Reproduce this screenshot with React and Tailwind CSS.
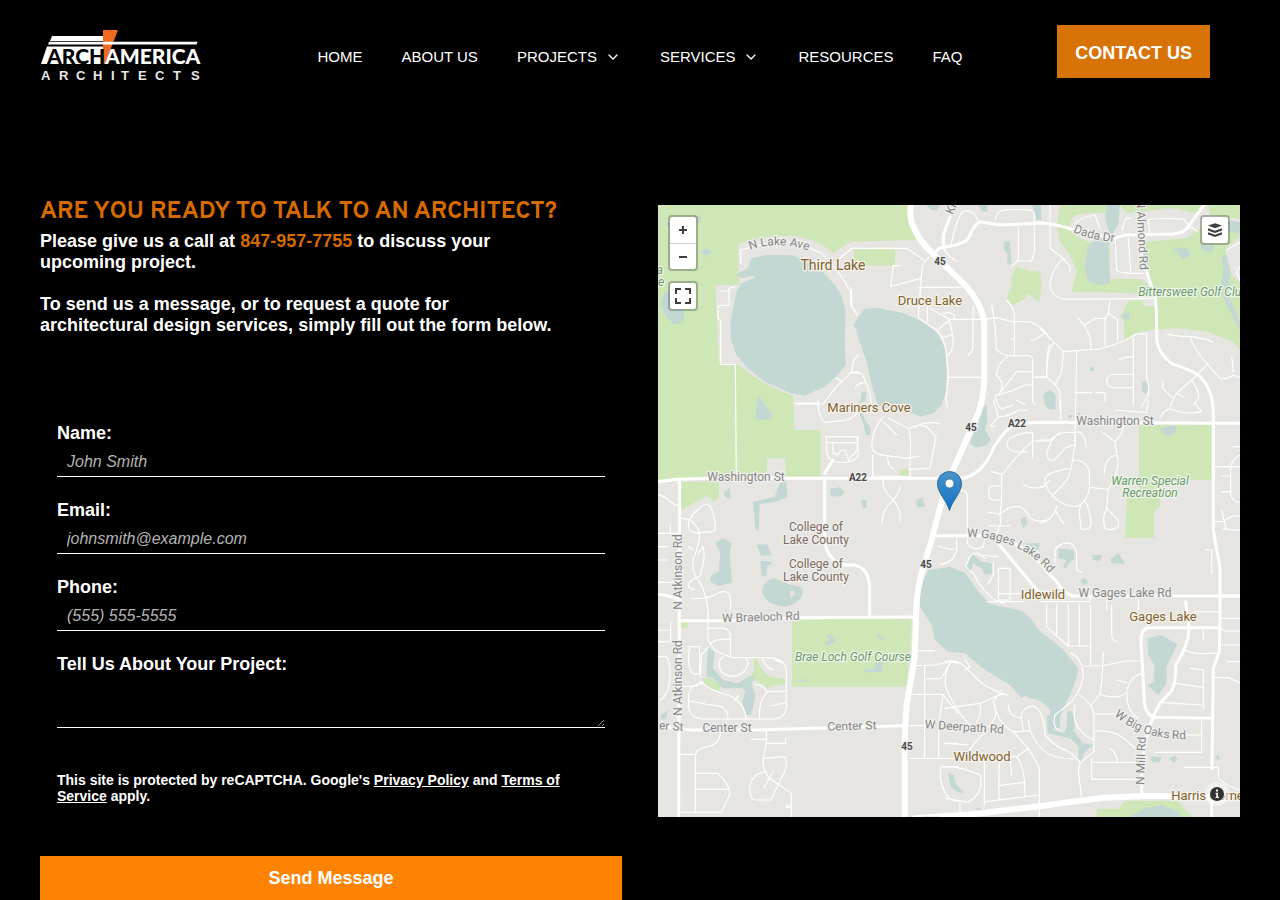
import React from "react";
import { ChevronDown } from "lucide-react";

const navItems = [
    { label: "HOME" },
    { label: "ABOUT US" },
    { label: "PROJECTS", menu: true },
    { label: "SERVICES", menu: true },
    { label: "RESOURCES" },
    { label: "FAQ" },
];

const fields = [
    { id: "name", label: "Name:", type: "text", placeholder: "John Smith" },
    { id: "email", label: "Email:", type: "email", placeholder: "johnsmith@example.com" },
    { id: "phone", label: "Phone:", type: "tel", placeholder: "(555) 555-5555" },
];

// Map geometry, split in tiles. Each tile is drawn at three units per map pixel.
const tiles = [
    {
        x: 0,
        y: 0,
        parks: "M0 0H752L760 60L781 105L576 110L525 145Q480 100 400 93Q320 88 240 118L243 240L173 240L183 475L235 478L258 492Q330 550 405 570L410 675H488V815H382V760H327V818L65 822L0 828Z",
        water: "M248 200L270 190L280 160L320 150L400 150L450 170L500 205L530 240L550 270L563 320L560 400L563 480L535 515L500 545L440 572L400 565L320 530L270 490L235 450L218 400L217 350L235 260L250 235L290 218L285 212L250 220L235 208ZM127 140L145 130L162 142L145 154ZM8 295Q12 260 35 258L75 300Q85 330 75 345Q60 365 45 355Q12 330 8 295ZM115 35H130L128 50L118 55ZM22 55L36 52V62L22 60ZM300 572L292 643H340L342 625L318 595ZM585 360L600 350V380Z",
        minor: "M248 175V135Q330 108 400 112Q450 125 490 145Q540 190 578 260V300L598 330M190 258H213V300L180 303V340L188 345V478H232L235 820M230 245L213 250V258M418 597H495L535 545L580 503L600 500M535 518L552 530M600 450Q580 470 582 503M540 165L580 130H600",
    },
    {
        x: 192,
        y: 0,
        parks: "M12 133H135V182H12ZM500 185L550 200L572 197L574 260L565 290L535 265L525 280L487 303L470 280L482 250L485 215Z",
        water: "M15 350L42 312L80 308L160 325L230 355L265 390L285 430L290 490L288 560L275 600L250 625L210 635L190 625L130 612L85 603L65 540L50 470L25 400ZM228 0H270L260 18L245 15ZM385 0H412V20L395 18ZM462 110H480L485 178H472L473 148L462 135ZM547 0H573V45H560ZM35 560H50L45 590L30 595ZM580 570L600 555V610L585 600Z",
        minor: "M0 130H170L222 165M238 155Q215 175 215 200L205 335Q210 345 260 375Q285 400 290 450L295 515L288 580L292 605M150 182H130L122 245L212 220M207 247H335M240 310L298 343H400L440 338L485 350H540Q580 365 600 402M232 305V350M280 325L300 323L313 330V343M298 345L263 375M298 343L308 388L278 398M308 388Q315 430 295 450M370 305L368 435L355 450M297 517H395M425 300Q440 380 438 430Q450 448 475 452H540L548 460V590L555 600M480 402H493M470 285Q493 310 493 330V450M485 185L505 165V60M505 168H545L553 140V25Q550 15 530 14H470Q440 15 435 45M540 405H555L585 383M600 420Q590 430 590 515L550 517M472 455Q440 480 440 510Q470 540 445 570L500 500H545M438 572Q500 555 520 540H548M435 570Q440 600 455 612L490 600M303 120Q320 40 340 18Q370 10 385 50M280 130L300 155L318 168M5 250V300L20 328M0 503L35 505Q60 550 65 600M15 550Q20 535 45 532",
        mid: "M390 50Q375 55 355 100Q340 120 270 128L248 148M300 35L280 90V128M390 50L450 60L575 55",
        major: "M182 -10Q178 40 190 65Q205 105 250 148L340 235Q400 300 403 360V520Q400 580 385 625L300 815Q270 900 245 1005L215 1105Q200 1160 199 1215L194 1360L170 1500L164 1600V1840",
    },
    {
        x: 382,
        y: 0,
        parks: "M50 60L60 0H200V25Q120 20 100 35Q90 45 90 70L110 95L145 110L210 125V222H300L320 235L332 268L180 262L95 262L110 200L90 150L60 110ZM310 110L440 100L480 70L600 60V435L580 410L500 380L420 370L330 375L285 385L252 405V350L240 335L268 287H310V303H345L330 230ZM240 0H490L470 25L400 10L260 25ZM505 0H600V42L510 30ZM0 230V280",
        land: "M555 135L600 95V235L575 210Z",
        water: "M200 0H240L235 60L215 90L205 130L210 235L180 240L145 230L133 190L145 120L175 100L210 90L195 40ZM400 128L440 130L453 150L430 163ZM480 118L525 120L515 143L485 135ZM560 45L600 50V85L565 80ZM545 150L575 150L600 135V160L570 210L565 270L600 350V375L560 300L540 250L550 200ZM245 330L268 320L270 340L255 348ZM308 130L325 150L322 190L310 170ZM150 487H162V498H150ZM305 530H320L325 550L320 565L308 563ZM10 575Q20 553 32 556L47 570V612L28 615Q12 600 10 575Z",
        minor: "M30 0V130L70 160L90 185V200M70 160Q30 200 30 240Q35 285 90 283L340 280M210 285L205 325L233 345V405M205 325L195 345V420M112 338L133 360L165 340H195M133 360L150 395L153 432M0 370L70 440L180 432Q270 405 285 388L320 385V520Q330 545 325 570L305 605M110 440L105 715M280 400V600M237 463Q260 455 280 455M280 508H215Q200 515 200 530Q205 550 225 548H280M105 563H155M168 563H195V590M70 440L65 500L45 540M40 415Q20 440 20 517H0M20 517Q50 540 60 560V615M383 388Q420 395 450 395Q500 400 518 412M450 395Q460 430 500 475L540 520Q560 525 580 510L600 518M575 455L580 500M500 480L455 525L410 565L390 605M368 530V550L400 580M410 565L430 575M455 525Q480 560 475 580L460 600M330 90L325 45Q340 38 430 42L450 65L475 80M225 90L230 195Q235 205 290 205H310M265 100L272 200M245 75L258 40H270M100 80Q95 40 165 30L180 70M560 135L600 112M600 185L590 200L600 225",
        mid: "M0 53Q60 58 100 75L220 100L255 90L400 87Q435 82 445 65L495 -5M305 150L320 200L345 275Q350 290 350 400Q355 450 400 478Q470 500 485 520Q520 560 520 625V975Q525 1010 535 1060Q542 1090 540 1110V1240L538 1340L520 1390L516 1690",
    },
    {
        x: 0,
        y: 195,
        parks: "M68 245H183V290L170 305L145 287L70 332Z",
        water: "M197 275L215 265L218 298L200 290ZM285 305L350 290L365 250L385 245L388 290Q370 305 305 312L302 395L292 385ZM516 267L545 262L560 275L550 290L518 288ZM172 430L195 415L222 430L215 460L222 548L180 558L157 545L160 525L182 515L187 460ZM295 435L328 432L340 465L310 468ZM307 482L347 485L328 500L325 530L310 525ZM312 570Q320 540 350 535L400 555Q430 555 435 575Q430 610 380 620Q320 615 312 570Z",
        land: "M395 575L405 570L410 582L398 594Z",
        minor: "M410 10H480M480 0Q480 50 500 68L570 60L600 40M505 110H600V170Q580 190 550 187Q510 190 505 150ZM505 128H600M525 128V160L540 165Q545 150 560 150L575 185M0 283Q25 290 50 315H65M70 355Q110 355 125 400Q125 430 105 480Q100 520 125 545Q150 590 152 660M125 400Q85 400 92 365Q120 315 150 312Q170 330 172 390Q165 398 125 397M92 440L105 450M118 465L135 440Q145 470 125 530Q95 540 90 555Q95 570 110 568M0 400H65M37 375V400M0 440H30M0 547H50M100 595Q150 600 190 575Q215 570 218 600V630M0 480H30",
        mid: "M-10 246L60 238L150 235H920M65 238L62 1260M500 235V420Q505 480 560 495H590Q635 505 635 570V650M500 220L525 180M0 583Q30 585 65 600",
    },
    {
        x: 192,
        y: 195,
        parks: "M148 208H178V230H148Z",
        water: "M390 20L410 15L412 60L405 90L423 120L410 135L375 143L360 130L368 105L385 80ZM25 0L45 60L62 85V105H48L40 70L28 40ZM35 300H50V325L37 322ZM200 300L218 292L225 320L200 322ZM510 358L525 350L533 370L520 385ZM525 430L570 430L565 450L545 455ZM365 460L395 485L425 490V520L405 525L395 505L370 490L360 515L345 505ZM235 510L300 500L345 518L385 575L420 612L505 630Q540 640 565 690L635 745L685 805Q680 850 645 915L630 950V985H605L600 930Q580 900 540 895L500 878L480 855L405 810L345 760L294 755L255 720L245 675L210 620Q205 560 235 510Z",
        minor: "M100 50Q65 90 65 140Q70 165 110 167L170 175L208 168M115 55L175 85Q185 100 180 180V230L68 228V165M100 65L140 105M180 85Q200 70 230 80L258 110L240 205L180 208M195 85Q220 60 270 72M112 167Q115 205 130 205M100 240Q95 270 130 300Q155 330 150 362M150 262Q145 290 115 315Q95 340 97 368M0 110H22V150L0 175M330 270Q352 270 352 290V430Q370 455 400 440L405 415M265 438Q300 450 313 448M320 410V450Q310 490 270 492M350 490Q340 500 370 520Q410 600 465 612M352 490Q360 455 385 460L405 475M385 465L445 470M430 490V525L415 550M445 505H480V600H445V505M445 580L570 582M410 605H520M425 215L455 222V300L450 345L452 370L440 400M455 258H420Q410 300 430 300H455M455 225L500 170L545 125M548 175V100Q520 92 480 115Q465 130 475 145Q490 160 530 155M548 123H600M415 337L450 342Q480 315 510 320Q530 330 540 355Q570 370 600 358M415 378H480M520 255Q550 270 580 260L600 240M430 0L445 50L422 78L435 80M445 50Q480 50 505 30H530M500 0L525 15",
        mid: "M300 235H340Q400 220 430 145Q465 85 500 70L600 67M262 407H380Q450 400 510 440Q560 470 600 525L620 545Q640 580 670 588H1170M440 425L565 575L640 583",
    },
    {
        x: 382,
        y: 195,
        parks: "M297 75H515V240H360V320L342 335V413H255L260 295H297Z",
        water: "M357 85L410 75L408 95L390 108L370 103ZM55 445L103 450V480L90 485L75 508L70 495L80 480L55 475ZM155 465L185 465L180 483L160 480ZM210 480L235 458L255 492L215 490ZM122 540L135 535L145 548L130 556ZM85 45H95V54H85ZM110 40H122V50H110Z",
        minor: "M105 100V130L98 180Q90 220 85 235L35 290M0 120H30Q60 95 85 97H120Q138 110 138 140M60 97Q30 120 20 160Q20 180 40 183L75 145L100 135M98 180Q145 180 148 220V265Q140 315 100 320Q40 310 15 250Q10 225 45 215L85 205M132 300Q155 330 152 380Q140 395 122 385L118 330L122 315M50 320Q40 360 0 370M48 335L70 370M0 262L15 258M62 0V60M148 262L205 268Q230 230 235 190L225 125L190 98M225 125Q250 100 250 80M230 165Q195 170 193 220M205 268L200 325L235 360V380Q215 395 195 385Q185 350 200 325M225 30L320 38L325 0M362 50Q380 20 400 30Q440 45 485 35L465 10M525 200H600M545 228H570M545 275H570M600 165Q570 180 572 210V280Q575 305 600 308M525 365H550Q570 345 600 348M545 330Q555 380 560 390M550 385Q570 390 600 390M497 450H515V520M45 490V450Q60 425 90 430Q110 440 110 470V510L125 517M0 605H150V588M580 140H600M200 590V630M295 590V630",
        mid: "M0 67L600 70M540 588H600",
    },
    {
        x: 0,
        y: 400,
        parks: "M402 42H760L758 120L745 245H402ZM68 50H87V68H68ZM135 220L160 222L190 240L180 262L140 240ZM287 158H295Q310 200 335 215L383 222L380 240L335 243L330 258L320 240L290 225L275 215L288 200Z",
        water: "M150 125L170 140L165 190L195 225L240 235L270 215L290 212L280 240L293 270L280 330H265L252 290L262 260L255 250H195L165 220L145 215ZM500 90H520L532 108L510 122L498 115L515 105ZM660 88L680 105L657 100ZM620 190L645 195L655 170L675 175L670 200L620 202ZM425 228L448 220V233ZM10 330L30 315L25 340L10 345ZM872 505L885 515L890 540L900 555L880 550Z",
        minor: "M150 25V105L170 135Q220 160 230 158H340Q385 165 385 200V310Q380 340 350 342H130Q95 335 92 310V270Q95 240 130 235M150 70H200Q218 75 217 100V150M155 115Q175 100 217 103M195 155Q175 170 190 200Q230 230 262 195Q275 180 265 160M95 125H125V205L110 208Q90 200 92 150ZM128 215L130 150L150 128M75 245L115 243L130 230Q150 255 210 270Q260 290 265 345M92 288L190 305Q210 315 210 340M138 290V300M232 285L242 272M290 240Q310 235 328 260L383 258M328 260Q300 290 305 338M340 303L385 292M313 158Q320 185 345 195M350 165L378 175M0 75H40M38 50V110M0 110H38M0 155H25Q40 175 35 230Q30 270 8 285M187 375Q190 410 160 422Q115 430 112 450V622M68 448H112M68 622H190L215 570Q220 545 180 505H112M112 553H212M280 403H325V380M325 403V415H383V400M325 415L315 460L380 455Q390 475 380 500L350 560L340 585H290Q275 580 275 545Q280 510 320 500M315 460Q315 500 335 520L400 565V636M318 548L345 500M400 602H385V608H400M755 460H900M842 365V460M800 180V460M770 182L830 180L880 170L900 175M805 222L850 220L878 170M762 268H855L900 325M855 268L842 365M778 137H830M755 362H820M870 415H900M850 485Q840 520 860 560Q870 585 900 590M850 485H900",
        mid: "M65 47H200L420 38L765 36M-5 365L100 375H280L470 370L740 362",
    },
    {
        x: 287,
        y: 400,
        parks: "M457 612H520L540 588H700L725 620L745 636H455Z",
        water: "M550 636L600 610L650 600L700 620L710 636ZM607 100L650 90L697 118L665 185V235L640 270L607 240L627 232L628 180L610 150ZM615 455H650L645 472L620 470ZM673 460L690 452L697 465L685 473ZM808 460L820 447L825 465ZM10 505L25 510L35 540L60 565L35 560L15 535ZM87 608L112 612L110 622ZM305 330H330L325 375L355 385Q370 370 365 320L380 318Q390 340 388 380L415 415L445 420L420 440L408 468L400 460L402 425L375 400L308 385ZM215 265L250 262L230 280Z",
        minor: "M305 0V65L370 123H435M335 0V95M370 0V123M403 0V123M437 0V180M500 0V90Q500 108 517 110M378 143Q415 165 415 215Q410 250 380 290L330 330Q320 370 345 375M415 183H470L540 168H590M475 143Q472 230 465 265L440 300M403 270Q440 290 447 330V440L405 475L400 500L410 580M595 205Q555 210 545 260Q545 320 580 340M465 268Q520 285 540 265M515 225L545 233M448 327H530M448 378Q500 375 530 395Q550 410 570 430M440 472H590M440 460V523H590M495 430Q515 445 517 470M390 300Q380 350 410 380Q430 400 447 405M235 380L228 330Q240 300 270 305Q300 330 300 390Q330 425 370 440Q400 460 405 475M250 345Q255 390 280 420Q310 460 385 462M190 300Q190 335 230 340M0 170Q40 160 70 195L110 235Q150 260 190 272M0 240Q20 300 70 355M15 175Q0 200 0 240M60 165L75 185L60 195M130 365L150 340Q155 310 145 290L170 255M0 310L105 295L175 265M105 295Q110 330 95 350M145 290Q160 360 205 380L255 378M205 380L250 430L215 455H165Q160 500 162 585M250 430Q280 480 283 490V636M215 455Q240 480 240 575M160 542L240 532M120 590L283 570M118 460V600M195 455L200 510M105 510Q120 560 70 592L0 580M0 485Q50 485 105 510M45 595V630M125 380Q90 400 65 455M0 415L70 420M720 135Q740 148 790 145H820M775 65V105M735 190L775 195V310M692 235L775 247M645 292L770 300M825 40H885M825 68L840 78H885M825 120H885M845 170H885M808 218H850Q870 225 885 235M630 442H770V345M720 390H770M720 487H820V520Q850 545 885 555M750 20H820",
        mid: "M820 68H610Q587 70 588 110L598 290Q600 325 625 337L800 340M722 -10L732 70Q732 120 692 180Q692 230 682 255L645 295Q615 345 600 420L590 480V570M800 570V636",
        major: "M-90 640L80 628L270 605L475 578L620 572L890 580",
    },
];

const roadLabels = [
    { text: "Washington St", x: 88, y: 276 },
    { text: "Washington St", x: 457, y: 220 },
    { text: "W Gages Lake Rd", x: 467, y: 392 },
    { text: "W Braeloch Rd", x: 103, y: 416, turn: -2 },
    { text: "Center St", x: 69, y: 527 },
    { text: "Center St", x: 194, y: 525, turn: -2 },
    { text: "ter St", x: 11, y: 525, turn: 4 },
    { text: "W Deerpath Rd", x: 306, y: 526, turn: 4 },
    { text: "N Atkinson Rd", x: 24, y: 367, turn: -90 },
    { text: "N Atkinson Rd", x: 24, y: 473, turn: -90 },
    { text: "N Mill Rd", x: 487, y: 556, turn: -88 },
    { text: "N Almond Rd", x: 480, y: 30, turn: 87 },
    { text: "Kr", x: 297, y: 5, turn: -65 },
];

const curvedLabels = [
    { id: "lake-ave", text: "N Lake Ave", d: "M92 45Q118 35 152 46" },
    { id: "dada-dr", text: "Dada Dr", d: "M415 27Q436 36 460 37" },
    { id: "gages-rd", text: "W Gages Lake Rd", d: "M309 332Q362 332 394 371" },
    { id: "big-oaks-rd", text: "W Big Oaks Rd", d: "M456 510Q485 536 530 534" },
];

const shields = [
    { text: "45", x: 282, y: 60 },
    { text: "45", x: 313, y: 226 },
    { text: "A22", x: 359, y: 222 },
    { text: "A22", x: 200, y: 276 },
    { text: "45", x: 268, y: 363 },
    { text: "45", x: 249, y: 545 },
    { text: "132", x: 273, y: 620 },
];

const towns = [
    { text: "Third Lake", x: 175, y: 65, big: true },
    { text: "Druce Lake", x: 272, y: 100 },
    { text: "Mariners Cove", x: 211, y: 207 },
    { text: "Idlewild", x: 385, y: 394 },
    { text: "Gages Lake", x: 505, y: 416 },
    { text: "Wildwood", x: 324, y: 556 },
    { text: "Harris Corners", x: 555, y: 595 },
];

const schools = [
    { text: "College of", x: 158, y: 326 },
    { text: "Lake County", x: 158, y: 339 },
    { text: "College of", x: 158, y: 363 },
    { text: "Lake County", x: 158, y: 376 },
];

const parkLabels = [
    { text: "Bittersweet Golf Club", x: 535, y: 91 },
    { text: "Warren Special", x: 492, y: 280 },
    { text: "Recreation", x: 492, y: 292 },
    { text: "Brae Loch Golf Course", x: 195, y: 456 },
    { text: "a", x: 2, y: 69 },
    { text: "e", x: 3, y: 81 },
];

function Logo() {
    return (
        <svg viewBox="0 0 162 54" className="h-[54px] w-[162px]" role="img" aria-label="ArchAmerica Architects">
            <path d="M12 7H63V12H10Z" fill="#fff" />
            <path d="M7 17.500H63V35H1Z" fill="#fff" />
            <path d="M63 1H78L65 35H63Z" fill="#f26a21" />
            <path d="M9 12.800H157.500L156.500 15.500H8Z" fill="#fff" />
            <g fontFamily="Lato" fontWeight="900" fontSize="21">
                <text x="7" y="35" fill="#000">ARCH</text>
                <text x="65" y="35" fill="#fff">AMERICA</text>
            </g>
            <text
                y="51"
                x="1 19 36 53 71 81 98 115 133 151"
                fill="#e8e8e8"
                fontFamily="Liberation Sans"
                fontWeight="700"
                fontSize="13"
            >
                ARCHITECTS
            </text>
        </svg>
    );
}

function Header() {
    return (
        <header className="grid h-[78px] grid-cols-[1fr_auto_1fr] items-start px-10 pt-[25px]">
            <a href="#home" className="pt-1">
                <Logo />
            </a>
            <nav className="flex h-16 items-center gap-[39px] text-[15px]">
                {navItems.map((item) => (
                    <a key={item.label} href="#nav" className="flex items-center gap-2 whitespace-nowrap">
                        {item.label}
                        {item.menu && <ChevronDown className="size-4" strokeWidth={2} />}
                    </a>
                ))}
            </nav>
            <a
                href="#contact"
                className="mr-[30px] flex h-[53px] items-center justify-self-end bg-[#d87307] px-[18px] pt-[3px] text-lg font-bold whitespace-nowrap"
            >
                CONTACT US
            </a>
        </header>
    );
}

function MapLabels({ items, ...style }) {
    return (
        <g textAnchor="middle" paintOrder="stroke" strokeWidth="2.5" strokeLinejoin="round" {...style}>
            {items.map(({ text, x, y, turn, big }) => (
                <text
                    key={`${text}-${x}-${y}`}
                    x={x}
                    y={y}
                    fontSize={big ? 14 : undefined}
                    transform={turn ? `rotate(${turn} ${x} ${y})` : undefined}
                >
                    {text}
                </text>
            ))}
        </g>
    );
}

function MapLayer({ name, ...style }) {
    return (
        <g {...style}>
            {tiles.map((tile) =>
                tile[name] ? (
                    <path
                        key={`${tile.x}-${tile.y}`}
                        transform={`translate(${tile.x} ${tile.y}) scale(0.33333)`}
                        d={tile[name]}
                    />
                ) : null
            )}
        </g>
    );
}

function MapDrawing() {
    const road = { fill: "none", stroke: "#fff", strokeLinejoin: "round", strokeLinecap: "round" };

    return (
        <svg
            viewBox="0 0 582 612"
            preserveAspectRatio="xMidYMid slice"
            className="block h-full w-full"
            fontFamily="Roboto, sans-serif"
            fontSize="12"
        >
            <defs>
                <linearGradient id="pin" x1="0" y1="0" x2="0" y2="1">
                    <stop offset="0" stopColor="#4a94cb" />
                    <stop offset="1" stopColor="#126fc6" />
                </linearGradient>
                {curvedLabels.map((label) => (
                    <path key={label.id} id={label.id} d={label.d} />
                ))}
            </defs>
            <rect width="582" height="612" fill="#e6e5e2" />
            <MapLayer name="parks" fill="#cfe7b7" />
            <MapLayer name="water" fill="#c4d8d3" />
            <MapLayer name="land" fill="#e6e5e2" />
            <MapLayer name="minor" {...road} strokeWidth="3.500" />
            <MapLayer name="mid" {...road} strokeWidth="9" />
            <MapLayer name="major" {...road} strokeWidth="18" />

            <MapLabels items={roadLabels} fill="#868686" stroke="#f0efed" />
            <g fill="#868686" stroke="#f0efed" strokeWidth="2.5" paintOrder="stroke">
                {curvedLabels.map((label) => (
                    <text key={label.id}>
                        <textPath href={`#${label.id}`}>{label.text}</textPath>
                    </text>
                ))}
            </g>
            <MapLabels items={shields} fill="#4a4a4a" stroke="#f0efed" fontSize="10" fontWeight="700" />
            <MapLabels items={schools} fill="#7d6a5e" stroke="#f0efed" />
            <MapLabels items={parkLabels} fill="#6c9a6c" stroke="#eef5e8" fontStyle="italic" />
            <MapLabels items={towns} fill="#7f622f" stroke="#f6f3ec" fontSize="13" />

            {/* Office pin */}
            <path
                d="M291.500 305.500C289 296 279.500 288 279.500 278.500A12 12 0 0 1 303.500 278.500C303.500 288 294 296 291.500 305.500Z"
                fill="url(#pin)"
                stroke="#2e6c97"
            />
            <circle cx="291.500" cy="278.500" r="4.500" fill="#fff" stroke="#2e6c97" strokeWidth="0.800" />
        </svg>
    );
}

function MapPanel() {
    return (
        <section aria-label="Map" className="relative mt-[9px] h-[612px] overflow-hidden">
            <MapDrawing />

            <div className="absolute top-[10px] left-[10px] flex flex-col gap-[10px]">
                <div className="overflow-hidden rounded border-2 border-black/25 bg-white bg-clip-padding">
                    <button aria-label="Zoom in" className="flex size-[26px] items-center justify-center">
                        <svg viewBox="0 0 8 8" className="size-2" stroke="#404040" strokeWidth="2">
                            <path d="M0 4H8M4 0V8" />
                        </svg>
                    </button>
                    <button
                        aria-label="Zoom out"
                        className="flex size-[26px] items-center justify-center border-t border-gray-300"
                    >
                        <svg viewBox="0 0 8 8" className="size-2" stroke="#404040" strokeWidth="2">
                            <path d="M0 4H8" />
                        </svg>
                    </button>
                </div>
                <button
                    aria-label="Full screen"
                    className="flex size-[30px] items-center justify-center rounded border-2 border-black/25 bg-white bg-clip-padding"
                >
                    <svg viewBox="0 0 16 16" className="size-4" fill="none" stroke="#404040" strokeWidth="2">
                        <path d="M1 6V1H6M10 1H15V6M15 10V15H10M6 15H1V10" />
                    </svg>
                </button>
            </div>

            <button
                aria-label="Layers"
                className="absolute top-[10px] right-[10px] flex size-[30px] items-center justify-center rounded border-2 border-black/25 bg-white bg-clip-padding"
            >
                <svg viewBox="0 0 16 16" className="size-4" fill="#404040">
                    <path d="M1 3.500L8 1.200L15 3.500L8 6.200Z" />
                    <path d="M1 6.200L8 8.700L15 6.200V8.500L8 11L1 8.500Z" />
                    <path d="M1 10.300L8 12.800L15 10.300V12.600L8 15.100L1 12.600Z" />
                </svg>
            </button>

            <button
                aria-label="Map information"
                className="absolute right-[11px] bottom-[11px] flex size-6 items-center justify-center rounded-full bg-white/50"
            >
                <svg viewBox="0 0 14 14" className="size-[14px]">
                    <circle cx="7" cy="7" r="7" fill="#333" />
                    <path d="M6 2.500H8V4.500H6ZM5.500 5.800H8V10H9V11H5.500V10H6.300V6.800H5.500Z" fill="#fff" />
                </svg>
            </button>
        </section>
    );
}

function ContactForm() {
    return (
        <form className="mt-[86px]">
            <div className="flex flex-col gap-[22px] px-[17px]">
                {fields.map((field) => (
                    <div key={field.id}>
                        <label htmlFor={field.id} className="block text-lg leading-[23px] font-bold">
                            {field.label}
                        </label>
                        <input
                            id={field.id}
                            type={field.type}
                            placeholder={field.placeholder}
                            className="block h-8 w-full border-b border-white px-[10px] pt-[2px] text-base placeholder:text-[#b4b4b4] placeholder:italic"
                        />
                    </div>
                ))}
                <div>
                    <label htmlFor="project" className="block text-lg leading-[23px] font-bold">
                        Tell Us About Your Project:
                    </label>
                    <textarea id="project" className="block h-[52px] w-full resize-y border-b border-white px-[10px]" />
                </div>
                <p className="mt-[22px] text-sm leading-4 font-bold">
                    This site is protected by reCAPTCHA. Google's{" "}
                    <a href="#privacy" className="underline">
                        Privacy Policy
                    </a>{" "}
                    and{" "}
                    <a href="#terms" className="underline">
                        Terms of Service
                    </a>{" "}
                    apply.
                </p>
            </div>
            <button type="submit" className="mt-[52px] h-11 w-full bg-[#ff8303] text-lg font-bold">
                Send Message
            </button>
        </form>
    );
}

export default function App() {
    return (
        <div className="min-h-screen bg-black font-['Liberation_Sans',sans-serif] text-white">
            <Header />
            <main className="grid grid-cols-2 gap-9 px-10 pt-[118px]">
                <section>
                    <h1 className="font-[Overpass,Roboto,sans-serif] text-2xl leading-8 font-bold whitespace-nowrap text-[#d56b00]">
                        ARE YOU READY TO TALK TO AN ARCHITECT?
                    </h1>
                    <div className="mt-[3px] max-w-[516px] text-lg leading-[21px] font-bold">
                        <p>
                            Please give us a call at{" "}
                            <a href="tel:8479577755" className="text-[#d56b00]">
                                847-957-7755
                            </a>{" "}
                            to discuss your upcoming project.
                        </p>
                        <p className="mt-[21px]">
                            To send us a message, or to request a quote for architectural design services, simply fill
                            out the form below.
                        </p>
                    </div>
                    <ContactForm />
                </section>
                <MapPanel />
            </main>
        </div>
    );
}
